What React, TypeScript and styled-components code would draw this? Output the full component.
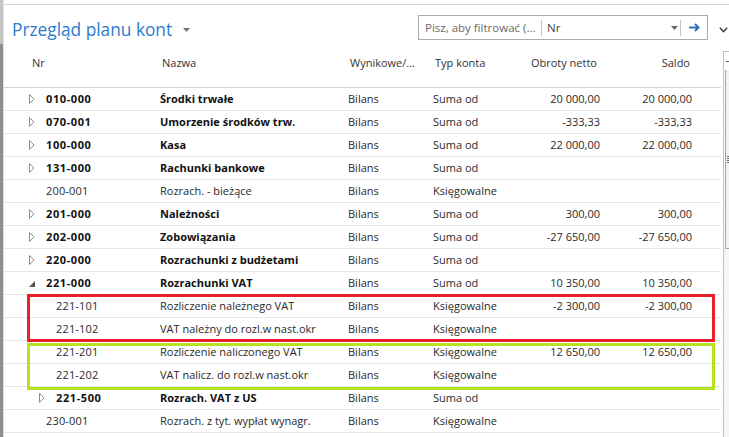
import React from 'react';
import styled, { createGlobalStyle } from 'styled-components';

const Global = createGlobalStyle`
  html, body { margin: 0; padding: 0; background: #fff; }
  body {
    font-family: "Open Sans", "Noto Sans", sans-serif;
    width: 729px; height: 437px; overflow: hidden;
  }
`;

const Page = styled.div`
  display: flex;
  width: 729px;
  height: 437px;
  overflow: hidden;
`;

const SideStrip = styled.div`
  width: 3px;
  flex: none;
  background: linear-gradient(#c4c4c4 0 44px, #8e8e8e 44px);
  border-right: 1px solid #e2e2e2;
`;

const Main = styled.div`
  flex: 1;
  display: flex;
  flex-direction: column;
  min-width: 0;
`;

const TopRule = styled.div`
  margin-top: 4px;
  height: 1px;
  background: #d6d6d6;
`;

const TitleBar = styled.div`
  height: 46px;
  flex: none;
  display: flex;
  align-items: flex-start;
  padding-left: 8px;
`;

const Title = styled.div`
  margin-top: 13px;
  font-size: 17.3px;
  line-height: 24px;
  color: #2b7bd0;
  display: flex;
  align-items: center;
  gap: 11px;
`;

const Spacer = styled.div`
  flex: 1;
`;

const SearchBox = styled.div`
  margin-top: 10px;
  width: 290px;
  height: 25px;
  box-sizing: border-box;
  border: 1px solid #ababab;
  display: flex;
  align-items: center;
  font-size: 11.5px;
`;

const Placeholder = styled.div`
  width: 116px;
  padding-left: 6px;
  color: #6a6a6a;
  white-space: nowrap;
`;

const Divider = styled.div`
  width: 1px;
  height: 16px;
  background: #c4c4c4;
  flex: none;
`;

const FieldName = styled.div`
  flex: 1;
  padding-left: 5px;
  color: #444;
`;

const IconSlot = styled.div<{ $w: number }>`
  width: ${(p) => p.$w}px;
  flex: none;
  display: flex;
  align-items: center;
  justify-content: center;
`;

const ChevronSlot = styled.div`
  width: 21px;
  flex: none;
  margin-top: 22px;
  padding-right: 1px;
  box-sizing: border-box;
  display: flex;
  justify-content: flex-end;
`;

const Content = styled.div`
  flex: 1;
  display: flex;
  min-height: 0;
`;

const Table = styled.div`
  flex: 1;
  min-width: 0;
  padding-right: 2px;
  display: flex;
  flex-direction: column;
`;

const cols = '156px 188px 85px 87px 80px 92px 1fr';

const HeaderRow = styled.div`
  display: grid;
  grid-template-columns: ${cols};
  height: 36px;
  border-bottom: 1px solid #d2d2d2;
  font-size: 11px;
  line-height: 16px;
  color: #333;
`;

const HeadCell = styled.div<{ $right?: boolean; $pl?: number; $pr?: number }>`
  padding-top: 4px;
  padding-left: ${(p) => p.$pl ?? 2}px;
  padding-right: ${(p) => p.$pr ?? 0}px;
  text-align: ${(p) => (p.$right ? 'right' : 'left')};
  white-space: nowrap;
`;

const RowsBody = styled.div`
  position: relative;
`;

const Row = styled.div`
  display: grid;
  grid-template-columns: ${cols};
  height: 22px;
  border-bottom: 1px solid #e6e6e6;
  align-items: center;
  font-size: 11px;
  line-height: 22px;
  color: #2a2a2a;
`;

const NrCell = styled.div<{ $level: number; $bold?: boolean }>`
  display: flex;
  align-items: center;
  padding-left: ${(p) => 24 + (p.$level - 1) * 10}px;
  font-weight: ${(p) => (p.$bold ? 700 : 400)};
  letter-spacing: ${(p) => (p.$bold ? '0.6px' : '0.15px')};
  color: ${(p) => (p.$bold ? '#111' : '#2a2a2a')};
  white-space: nowrap;
`;

const Expander = styled.div`
  width: 18px;
  flex: none;
  display: flex;
  align-items: center;
  padding-left: 1px;
  box-sizing: border-box;
`;

const Cell = styled.div<{ $bold?: boolean; $right?: boolean }>`
  font-weight: ${(p) => (p.$bold ? 700 : 400)};
  color: ${(p) => (p.$bold ? '#111' : '#2a2a2a')};
  text-align: ${(p) => (p.$right ? 'right' : 'left')};
  white-space: nowrap;
`;

const Marker = styled.div<{ $color: string; $top: number; $height: number }>`
  position: absolute;
  left: 23px;
  width: 688px;
  top: ${(p) => p.$top}px;
  height: ${(p) => p.$height}px;
  box-sizing: border-box;
  border: 3px solid ${(p) => p.$color};
  pointer-events: none;
`;

const ScrollBar = styled.div`
  width: 6px;
  flex: none;
  border-left: 1px solid #c2c2c2;
  border-top: 1px solid #c2c2c2;
  display: flex;
  flex-direction: column;
  box-sizing: border-box;
`;

const ScrollHead = styled.div`
  height: 18px;
  flex: none;
  display: flex;
  align-items: center;
  justify-content: flex-end;
`;

const HeadMark = styled.div`
  width: 3px;
  height: 1px;
  background: #666;
`;

const Thumb = styled.div`
  height: 178px;
  flex: none;
  margin-left: 1px;
  border-left: 1px solid #a4a4a4;
  border-bottom: 1px solid #a4a4a4;
  background: #f2f2f2;
  display: flex;
  align-items: center;
  justify-content: flex-end;
`;

const Grip = styled.div`
  width: 2px;
  height: 7px;
  background: repeating-linear-gradient(#6a6a6a 0 1px, transparent 1px 2px);
`;

const Track = styled.div`
  flex: 1;
  background: #f6f6f6;
`;

type RowData = {
  nr: string;
  name: string;
  typ: string;
  obroty?: string;
  saldo?: string;
  level: number;
  bold?: boolean;
  exp?: 'collapsed' | 'expanded';
};

const S = '\u00a0';

const rows: RowData[] = [
  { nr: '010-000', name: 'Środki trwałe', typ: 'Suma od', obroty: `20${S}000,00`, saldo: `20${S}000,00`, level: 1, bold: true, exp: 'collapsed' },
  { nr: '070-001', name: 'Umorzenie środków trw.', typ: 'Suma od', obroty: '-333,33', saldo: '-333,33', level: 1, bold: true, exp: 'collapsed' },
  { nr: '100-000', name: 'Kasa', typ: 'Suma od', obroty: `22${S}000,00`, saldo: `22${S}000,00`, level: 1, bold: true, exp: 'collapsed' },
  { nr: '131-000', name: 'Rachunki bankowe', typ: 'Suma od', level: 1, bold: true, exp: 'collapsed' },
  { nr: '200-001', name: 'Rozrach. - bieżące', typ: 'Księgowalne', level: 1 },
  { nr: '201-000', name: 'Należności', typ: 'Suma od', obroty: '300,00', saldo: '300,00', level: 1, bold: true, exp: 'collapsed' },
  { nr: '202-000', name: 'Zobowiązania', typ: 'Suma od', obroty: `-27${S}650,00`, saldo: `-27${S}650,00`, level: 1, bold: true, exp: 'collapsed' },
  { nr: '220-000', name: 'Rozrachunki z budżetami', typ: 'Suma od', level: 1, bold: true, exp: 'collapsed' },
  { nr: '221-000', name: 'Rozrachunki VAT', typ: 'Suma od', obroty: `10${S}350,00`, saldo: `10${S}350,00`, level: 1, bold: true, exp: 'expanded' },
  { nr: '221-101', name: 'Rozliczenie należnego VAT', typ: 'Księgowalne', obroty: `-2${S}300,00`, saldo: `-2${S}300,00`, level: 2 },
  { nr: '221-102', name: 'VAT należny do rozl.w nast.okr', typ: 'Księgowalne', level: 2 },
  { nr: '221-201', name: 'Rozliczenie naliczonego VAT', typ: 'Księgowalne', obroty: `12${S}650,00`, saldo: `12${S}650,00`, level: 2 },
  { nr: '221-202', name: 'VAT nalicz. do rozl.w nast.okr', typ: 'Księgowalne', level: 2 },
  { nr: '221-500', name: 'Rozrach. VAT z US', typ: 'Suma od', level: 2, bold: true, exp: 'collapsed' },
  { nr: '230-001', name: 'Rozrach. z tyt. wypłat wynagr.', typ: 'Księgowalne', level: 1 },
];

const Collapsed = () => (
  <svg width="6" height="10" viewBox="0 0 6 10">
    <polygon points="0.5,0.5 5,5 0.5,9.5" fill="#fff" stroke="#8c8c8c" strokeWidth="1" />
  </svg>
);

const Expanded = () => (
  <svg width="7" height="10" viewBox="0 0 7 10">
    <polygon points="6,3 6,9 0,9" fill="#555" />
  </svg>
);

const SmallCaret = ({ color }: { color: string }) => (
  <svg width="7" height="4" viewBox="0 0 7 4">
    <polygon points="0,0 7,0 3.5,4" fill={color} />
  </svg>
);

export default function App() {
  return (
    <>
      <Global />
      <Page>
        <SideStrip />
        <Main>
          <TopRule />
          <TitleBar>
            <Title>
              Przegląd planu kont
              <SmallCaret color="#777" />
            </Title>
            <Spacer />
            <SearchBox>
              <Placeholder>Pisz, aby filtrować (...</Placeholder>
              <Divider />
              <FieldName>Nr</FieldName>
              <IconSlot $w={12}>
                <SmallCaret color="#666" />
              </IconSlot>
              <Divider />
              <IconSlot $w={26}>
                <svg width="11" height="9" viewBox="0 0 11 9">
                  <path d="M0 4.5H9.5M6 1L9.5 4.5L6 8" fill="none" stroke="#2f72b8" strokeWidth="2" />
                </svg>
              </IconSlot>
            </SearchBox>
            <ChevronSlot>
              <svg width="9" height="6" viewBox="0 0 9 6">
                <path d="M0.8 0.8L4.5 4.5L8.2 0.8" fill="none" stroke="#444" strokeWidth="1.6" />
              </svg>
            </ChevronSlot>
          </TitleBar>
          <Content>
            <Table>
              <HeaderRow>
                <HeadCell $pl={28}>Nr</HeadCell>
                <HeadCell>Nazwa</HeadCell>
                <HeadCell>Wynikowe/...</HeadCell>
                <HeadCell>Typ konta</HeadCell>
                <HeadCell $right $pr={3}>Obroty netto</HeadCell>
                <HeadCell $right $pr={2}>Saldo</HeadCell>
                <div />
              </HeaderRow>
              <RowsBody>
                {rows.map((r) => (
                  <Row key={r.nr}>
                    <NrCell $level={r.level} $bold={r.bold}>
                      <Expander>
                        {r.exp === 'collapsed' && <Collapsed />}
                        {r.exp === 'expanded' && <Expanded />}
                      </Expander>
                      {r.nr}
                    </NrCell>
                    <Cell $bold={r.bold}>{r.name}</Cell>
                    <Cell>Bilans</Cell>
                    <Cell>{r.typ}</Cell>
                    <Cell $right>{r.obroty ?? ''}</Cell>
                    <Cell $right>{r.saldo ?? ''}</Cell>
                    <div />
                  </Row>
                ))}
                <Marker $color="#e8202a" $top={206} $height={48} />
                <Marker $color="#b4e41e" $top={255} $height={47} />
              </RowsBody>
            </Table>
            <ScrollBar>
              <ScrollHead>
                <HeadMark />
              </ScrollHead>
              <Thumb>
                <Grip />
              </Thumb>
              <Track />
            </ScrollBar>
          </Content>
        </Main>
      </Page>
    </>
  );
}
